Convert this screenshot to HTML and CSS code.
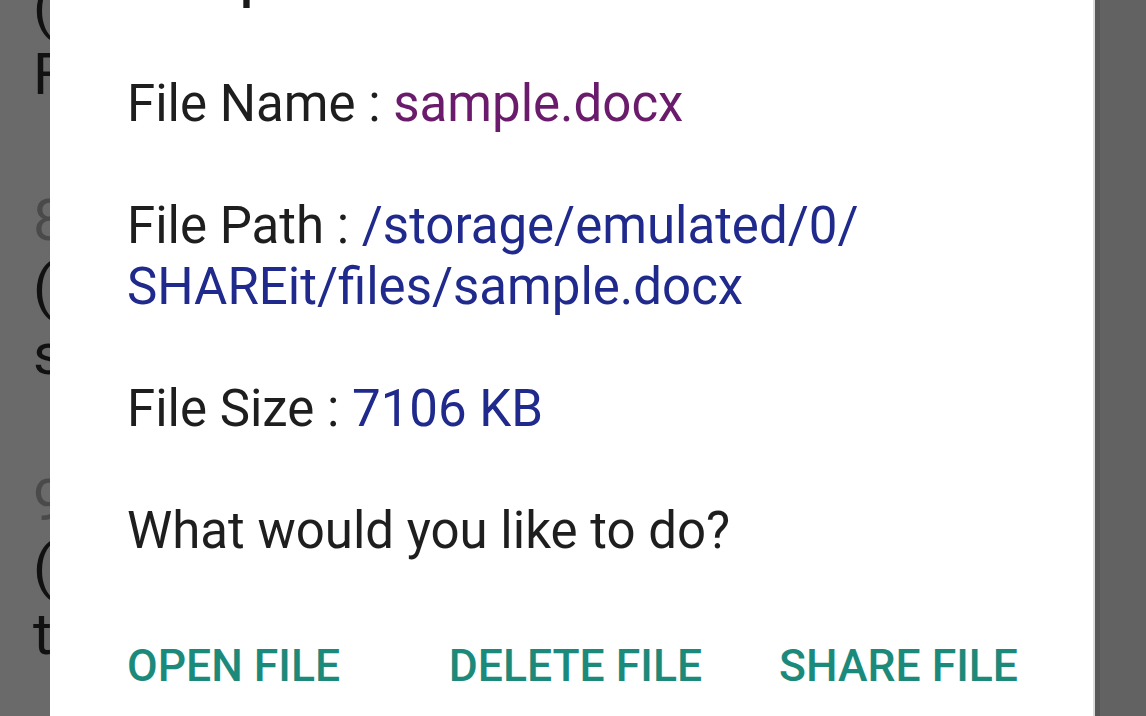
FILE: index.html
```html
<!DOCTYPE html>
<html lang="en">
<head>
<meta charset="utf-8">
<title>File details</title>
<link rel="stylesheet" href="styles.css">
</head>
<body>
<div class="screen">
  <div class="bg-list">
    <div class="item">
      <div class="num">7</div>
      <div class="line">(Chapter 7)</div>
      <div class="line">File</div>
    </div>
    <div class="item">
      <div class="num">8</div>
      <div class="line">(Chapter 8)</div>
      <div class="line">sample</div>
    </div>
    <div class="item">
      <div class="num">9</div>
      <div class="line">(Chapter 9)</div>
      <div class="line">test</div>
    </div>
  </div>

  <div class="dialog">
    <div class="title">Complete</div>
    <div class="content">
      <p class="row">File Name : <span class="name">sample.docx</span></p>
      <p class="row">File Path : <span class="value">/storage/emulated/0/<br>SHAREit/files/sample.docx</span></p>
      <p class="row">File Size : <span class="value">7106 KB</span></p>
      <p class="row">What would you like to do?</p>
    </div>
    <div class="actions">
      <button class="btn btn-neutral">OPEN FILE</button>
      <button class="btn">DELETE FILE</button>
      <button class="btn">SHARE FILE</button>
    </div>
  </div>
</div>
</body>
</html>
```

FILE: styles.css
```css
html, body {
  margin: 0;
  padding: 0;
  height: 100%;
  overflow: hidden;
}

body {
  background: linear-gradient(to right, #6a6a6a, #626262);
  font-family: Roboto, "Noto Sans", "Liberation Sans", sans-serif;
}

.screen {
  position: relative;
  width: 1146px;
  height: 716px;
  overflow: hidden;
}

.bg-list {
  margin-top: -93px;
  padding-left: 33px;
  font-size: 58px;
  line-height: 67px;
  color: #111111;
}

.item {
  margin-bottom: 79px;
}

.num {
  color: #4a4a4a;
}

.dialog {
  position: absolute;
  left: 50px;
  top: -55px;
  width: 1045px;
  height: 820px;
  box-sizing: border-box;
  padding: 0 75px 0 77px;
  background: #ffffff;
  border-right: 2px solid #dadada;
  box-shadow: 5px 0 0 #575757;
}

.title {
  padding-top: 1px;
  font-size: 54px;
  font-weight: 500;
  line-height: 66px;
  color: #1a1a1a;
  margin-bottom: 61px;
}

.content {
  font-size: 51px;
  line-height: 61px;
  color: #1e1e1e;
}

.row {
  margin: 0 0 61px 0;
}

.row:last-child {
  margin-bottom: 0;
}

.name {
  color: #6a1b6b;
}

.value {
  color: #1f2a8c;
}

.actions {
  display: flex;
  align-items: baseline;
  gap: 77px;
  margin-top: 78px;
}

.btn {
  border: none;
  background: none;
  padding: 0;
  font-family: Roboto, "Noto Sans", "Liberation Sans", sans-serif;
  font-size: 44.5px;
  font-weight: 500;
  line-height: 54px;
  color: #1c8a7b;
}

.btn-neutral {
  margin-right: auto;
}
```
